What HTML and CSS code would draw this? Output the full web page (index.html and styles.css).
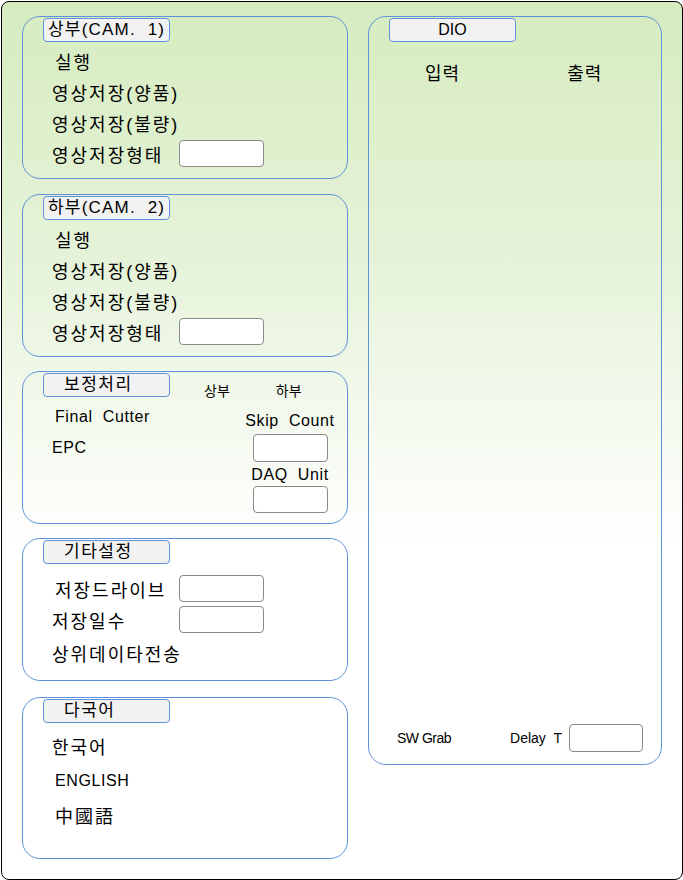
FILE: index.html
```html
<!DOCTYPE html>
<html lang="ko">
	<head>
		<meta charset="UTF-8">
		<meta name="viewport" content="width=device-width, initial-scale=1.0">
		<title>설정</title>
		<link rel="stylesheet" href="styles.css">
	</head>
	<body>
		<!-- 전체 프레임 -->
		<div class="frame">
			<!-- 왼쪽 설정 영역 -->
			<div class="left-col">

				<!-- 상부 카메라 -->
				<div class="panel cam">
					<div class="tag">상부(CAM.&nbsp; 1)</div>
					<div class="row indent">실행</div>
					<div class="row">영상저장(양품)</div>
					<div class="row">영상저장(불량)</div>
					<div class="row"><span class="lbl">영상저장형태</span><span class="field"></span></div>
				</div>

				<!-- 하부 카메라 -->
				<div class="panel cam">
					<div class="tag">하부(CAM.&nbsp; 2)</div>
					<div class="row indent">실행</div>
					<div class="row">영상저장(양품)</div>
					<div class="row">영상저장(불량)</div>
					<div class="row"><span class="lbl">영상저장형태</span><span class="field"></span></div>
				</div>

				<!-- 보정처리 -->
				<div class="panel corr">
					<div class="corr-top">
						<div class="tag wide">보정처리</div>
						<span class="head first">상부</span>
						<span class="head">하부</span>
					</div>
					<div class="corr-body">
						<div class="corr-left">
							<div class="row latin indent">Final&nbsp; Cutter</div>
							<div class="row latin">EPC</div>
						</div>
						<div class="corr-right">
							<div class="sub latin">Skip&nbsp; Count</div>
							<span class="field small"></span>
							<div class="sub latin daq">DAQ&nbsp; Unit</div>
							<span class="field small last"></span>
						</div>
					</div>
				</div>

				<!-- 기타설정 -->
				<div class="panel etc">
					<div class="tag wide">기타설정</div>
					<div class="row first indent"><span class="lbl short">저장드라이브</span><span class="field"></span></div>
					<div class="row"><span class="lbl">저장일수</span><span class="field"></span></div>
					<div class="row tall">상위데이타전송</div>
				</div>

				<!-- 다국어 -->
				<div class="panel lang">
					<div class="tag wide">다국어</div>
					<div class="row first">한국어</div>
					<div class="row latin indent">ENGLISH</div>
					<div class="row indent">中國語</div>
				</div>
			</div>

			<!-- DIO 영역 -->
			<div class="panel dio">
				<div class="tag center">DIO</div>
				<div class="dio-head">
					<span>입력</span>
					<span>출력</span>
				</div>
				<div class="dio-space"></div>
				<div class="dio-foot">
					<span class="grab">SW Grab</span>
					<span class="delay">Delay&nbsp; T</span>
					<span class="field delay-field"></span>
				</div>
			</div>
		</div>
	</body>
</html>
```

FILE: styles.css
```css
/* 기본 설정 */
body,
html {
	margin: 0;
	height: 100%;
	font-family: "Liberation Sans", "Noto Sans CJK KR", sans-serif;
	color: #000;
	background: #fff;
	overflow: hidden;
}

/* 전체 프레임 - 검은 테두리, 위쪽 연두색 그라데이션 */
.frame {
	box-sizing: border-box;
	width: 682px;
	height: 879px;
	margin: 1px 0 0 1px;
	padding: 14px 0 0 20px;
	border: 1px solid #000;
	border-radius: 8px;
	background: linear-gradient(to bottom, #d6ecbf 0%, #e6f3da 30%, #ffffff 62%, #ffffff 100%);
	display: flex;
	gap: 20px;
}

.left-col {
	width: 326px;
	display: flex;
	flex-direction: column;
}

/* 파란 테두리 패널 */
.panel {
	box-sizing: border-box;
	border: 1px solid #5f92d8;
	border-radius: 18px;
	padding: 1px 0 0 20px;
	font-size: 18px;
	letter-spacing: 2px;
}

.cam {
	height: 163px;
}

.cam + .cam {
	margin-top: 15px;
}

.corr {
	height: 153px;
	margin-top: 14px;
}

.etc {
	height: 143px;
	margin-top: 14px;
}

.lang {
	height: 162px;
	margin-top: 16px;
}

/* 패널 제목 버튼 */
.tag {
	box-sizing: border-box;
	width: 127px;
	height: 24px;
	padding-left: 4px;
	border: 1px solid #5f92d8;
	border-radius: 4px;
	background: #f2f2f2;
	font-size: 17px;
	line-height: 22px;
	letter-spacing: 1.2px;
	white-space: nowrap;
}

.tag.wide {
	padding-left: 20px;
	letter-spacing: 1.5px;
}

.tag.center {
	text-align: center;
	padding-left: 0;
	font-size: 16px;
	letter-spacing: 0;
}

/* 항목 줄 */
.row {
	display: flex;
	align-items: center;
	height: 31px;
	padding-left: 9px;
	white-space: nowrap;
}

.cam .tag + .row {
	margin-top: 3px;
}

.row.indent {
	padding-left: 12px;
}

.lbl {
	width: 127px;
}

.lbl.short {
	width: 124px;
}

.latin {
	font-size: 16px;
	letter-spacing: 0.6px;
}

/* 입력칸 */
.field {
	box-sizing: border-box;
	display: inline-block;
	width: 85px;
	height: 27px;
	border: 1px solid #8a8a8a;
	border-radius: 4px;
	background: #fff;
}

/* 보정처리 */
.corr-top {
	display: flex;
	height: 24px;
}

.head {
	margin-top: 8px;
	line-height: 20px;
	font-size: 14px;
	letter-spacing: 0;
	margin-left: 46px;
}

.head.first {
	margin-left: 34px;
}

.corr-body {
	display: flex;
}

.corr-left {
	width: 202px;
	padding-top: 4px;
}

.corr-right {
	width: 90px;
	display: flex;
	flex-direction: column;
	align-items: center;
}

.sub {
	margin-top: 14px;
	line-height: 20px;
	white-space: nowrap;
}

.sub.daq {
	margin-top: 3px;
}

.field.small {
	width: 75px;
	height: 28px;
	margin-top: 3px;
}

.field.small.last {
	height: 27px;
	margin-top: 1px;
}

/* 기타설정 */
.etc .row.first {
	margin-top: 9px;
}

.etc .row.tall {
	height: 35px;
}

/* 다국어 */
.lang .row {
	height: 34px;
}

.lang .row.first {
	height: 36px;
	margin-top: 5px;
}

/* DIO 패널 */
.dio {
	width: 294px;
	height: 749px;
	display: flex;
	flex-direction: column;
	padding-bottom: 12px;
	letter-spacing: 0;
}

.dio-head {
	display: flex;
	padding: 17px 0 0 36px;
	letter-spacing: 1px;
}

.dio-head span + span {
	margin-left: 107px;
}

.dio-space {
	flex: 1;
}

.dio-foot {
	display: flex;
	align-items: center;
	font-size: 14px;
	letter-spacing: -0.5px;
	padding-left: 8px;
}

.delay {
	margin-left: 59px;
	letter-spacing: 0;
}

.delay-field {
	width: 74px;
	height: 28px;
	margin-left: 7px;
}
```
